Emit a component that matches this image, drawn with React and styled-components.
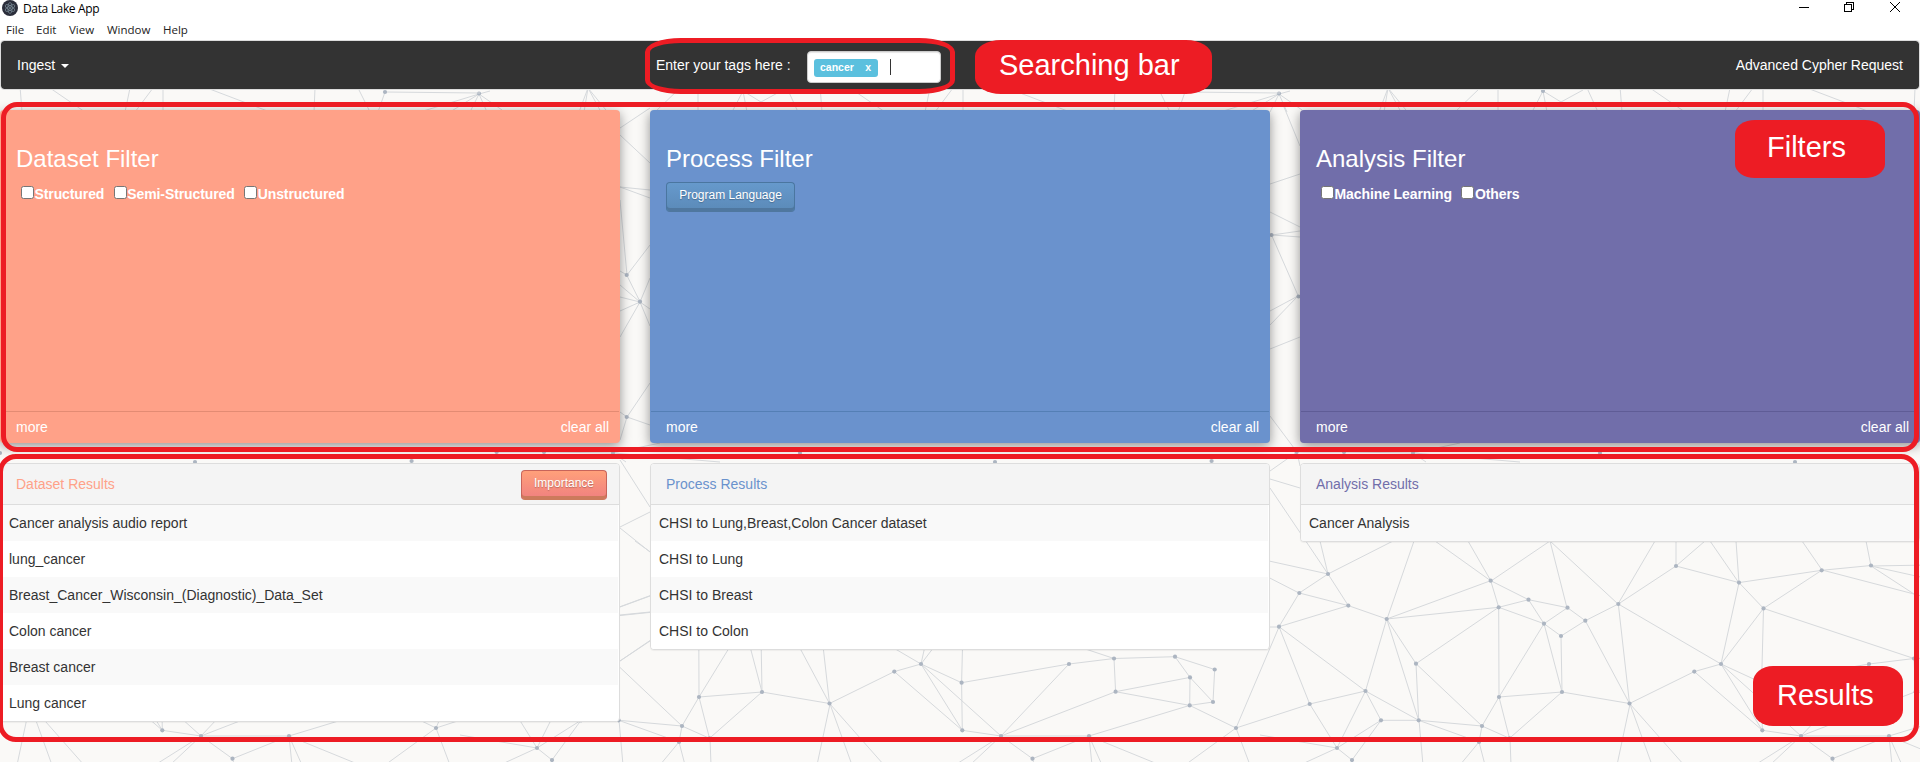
import React from 'react';
import styled, { createGlobalStyle } from 'styled-components';

const Global = createGlobalStyle`
  * { box-sizing: border-box; }
  html, body { margin: 0; padding: 0; }
  body { background: #faf9f7; font: 14px/20px "Liberation Sans", Arial, sans-serif; color: #333; overflow: hidden; }
`;

const Page = styled.div`
  position: relative;
  width: 1920px;
  height: 762px;
  overflow: hidden;
  background: #faf9f7;
`;
const Network = styled.svg`
  position: absolute;
  left: 0;
  top: 0;
`;
const Content = styled.div`
  position: relative;
`;
const Chrome = styled.div`
  height: 40px;
  background: #fff;
  color: #000;
  font: 12px/16px "Open Sans", "Noto Sans", sans-serif;
`;
const TitleBar = styled.div`
  height: 19px;
  display: flex;
  align-items: flex-start;
  padding-left: 2px;
`;
const AppName = styled.span`
  flex: 1;
  padding: 1px 0 0 5px;
  letter-spacing: -0.35px;
`;
const WindowButtons = styled.svg`
  flex: none;
  margin-right: 19px;
`;
const MenuBar = styled.div`
  display: flex;
  gap: 12px;
  padding: 3px 0 0 6px;
  font-size: 11.5px;
  color: #222;
`;
const MenuItem = styled.span`
  width: ${(p) => p.$w}px;
  white-space: nowrap;
`;

const Navbar = styled.nav`
  height: 50px;
  border: 1px solid #ddd;
  border-radius: 4px;
  background: #333;
  background-clip: padding-box;
  color: #fff;
  display: flex;
  align-items: center;
  padding: 0 16px;
`;
const NavSide = styled.div`
  flex: 1;
  display: flex;
  align-items: center;
  justify-content: ${(p) => (p.$end ? 'flex-end' : 'flex-start')};
`;
const Caret = styled.span`
  margin: 1px 0 0 6px;
  border: 4px solid transparent;
  border-top-color: #fff;
  border-bottom: 0;
`;
const Search = styled.div`
  display: flex;
  align-items: center;
  width: 285px;
  margin-right: 323px;
`;
const SearchLabel = styled.span`
  width: 151px;
`;
const TagInput = styled.div`
  width: 134px;
  height: 32px;
  margin-top: 3px;
  padding: 0 6px;
  border: 1px solid #ccc;
  border-radius: 4px;
  background: #fff;
  box-shadow: inset 0 1px 1px rgba(0, 0, 0, 0.1);
  display: flex;
  align-items: center;
`;
const Tag = styled.span`
  width: 64px;
  height: 18px;
  margin-top: 2px;
  padding: 0 7px 0 6px;
  border-radius: 3px;
  background: #5bc0de;
  color: #fff;
  font: bold 10.5px/17px "Liberation Sans", Arial, sans-serif;
  display: flex;
  justify-content: space-between;
`;
const TextCursor = styled.span`
  width: 1px;
  height: 16px;
  margin-left: 12px;
  background: #333;
`;

const Columns = styled.div`
  display: grid;
  grid-template-columns: 620px 620px 620px;
  column-gap: 30px;
  align-items: start;
`;
const FilterRow = styled(Columns)`
  margin-top: 20px;
`;
const ResultRow = styled(Columns)`
  margin-top: 20px;
`;
const FilterCard = styled.section`
  height: 333px;
  border-radius: 4px;
  background: ${(p) => p.$color};
  color: #fff;
  box-shadow: 0 3px 12px rgba(0, 0, 0, 0.42);
  display: flex;
  flex-direction: column;
`;
const FilterBody = styled.div`
  flex: 1;
  padding: 36px 16px 0;
`;
const FilterTitle = styled.h3`
  margin: 0;
  font-size: 24px;
  line-height: 26px;
  font-weight: 400;
`;
const CheckRow = styled.div`
  display: flex;
  gap: 9.5px;
  padding: 12px 0 0 5px;
`;
const CheckLabel = styled.label`
  display: flex;
  height: 20px;
  font-weight: 700;
  letter-spacing: -0.1px;
`;
const Box = styled.span`
  width: 13px;
  height: 13px;
  margin: 2px 0.5px 0 0;
  border: 1px solid #767676;
  border-radius: 2.5px;
  background: #fff;
`;
const FilterFooter = styled.footer`
  height: 32px;
  margin: 0 1px;
  padding: 5px 10px 0 15px;
  border-top: 1px solid ${(p) => p.$line};
  display: flex;
  justify-content: space-between;
`;
const RaisedButton = styled.button`
  width: ${(p) => p.$w}px;
  height: 30px;
  padding: 0 0 5px;
  font: 12px/18px "Liberation Sans", Arial, sans-serif;
  color: #fff;
  border: 1px solid ${(p) => p.$edge};
  border-bottom: 1px solid ${(p) => p.$base};
  border-radius: 4px;
  background: linear-gradient(${(p) => p.$from}, ${(p) => p.$to});
  box-shadow: inset 0 -3px 0 ${(p) => p.$base};
  text-shadow: 0 1px 1px rgba(0, 0, 0, 0.25);
`;
const FilterAction = styled.div`
  padding-top: 10px;
`;

const ResultCard = styled.section`
  border: 1px solid #ddd;
  border-radius: 4px;
  background: #fff;
  box-shadow: 0 1px 1px rgba(0, 0, 0, 0.05);
  overflow: hidden;
`;
const ResultHeader = styled.header`
  height: 41px;
  padding: 2px 12px 0 15px;
  border-bottom: 1px solid #ddd;
  background: #f4f4f4;
  color: ${(p) => p.$color};
  display: flex;
  justify-content: space-between;
  align-items: center;
`;
const HeaderText = styled.span`
  margin-top: -2px;
`;
const ResultItem = styled.div`
  height: 36px;
  padding: 8px;
  margin-right: 1px;
  background: ${(p) => (p.$odd ? '#f9f9f9' : '#fff')};
`;

const Outline = styled.div`
  position: absolute;
  left: ${(p) => p.$x}px;
  top: ${(p) => p.$y}px;
  width: ${(p) => p.$w}px;
  height: ${(p) => p.$h}px;
  border: 5px solid #ed1c24;
  border-radius: ${(p) => p.$r};
`;
const Callout = styled(Outline)`
  border: 0;
  background: #ed1c24;
  color: #fff;
  font-size: 29px;
  line-height: ${(p) => p.$lh}px;
  padding-left: ${(p) => p.$pad}px;
  white-space: nowrap;
`;

const NODES = [
  [1328,574],[1299.3,593],[1348.3,605.6],[1279,626.7],[1386.7,619],[1416,663.7],[1365.5,691],[1309.7,704],[1381,720.3],[1418.7,720.3],
  [1337,748],[1352,760],[1490.7,580.7],[1498.7,607.3],[1528.5,599.7],[1544,623.7],[1567.5,607.7],[1585.3,620.7],[1561,636],[1562,692],
  [1499,697],[1482,726],[1509.5,738.3],[1479,742],[1618.3,604],[1676,566],[1739,582.6],[1821.7,570.3],[1871,565.5],[1763.5,608.4],
  [1721,664],[1694.3,671.6],[1629.5,703.5],[1762.3,730.3],[1801,736],[1889,736],[1832.5,758.7],[1914,658.5],[1869,664],[1761.6,682.7],
  [1915.6,691.7],[1975,656.7],[2014.7,669.5],[1990,677.4],[2013,702],[1989.7,705.4],[2036,728],
  [1296.6,452],[1344,452],[1413,453],[1600,453],[1795,462],[2011.6,461],[1426.7,275],[1440,301.7],[1426.7,417],[1985,92],[1543,91],[1279,93.5],
  [1271.5,235],[1298.5,296.5],
];
const EDGES = [
  [0,1],[0,2],[1,2],[1,3],[2,3],[2,4],[3,7],[3,6],[7,6],[7,10],[6,4],[4,5],[4,9],[4,12],[4,13],[6,9],[6,8],[6,10],[8,9],[8,10],[8,11],
  [5,13],[5,21],[5,9],[9,21],[9,23],[21,22],[21,20],[21,23],[20,13],[20,19],[20,15],[20,22],[22,19],[15,19],[15,18],[18,17],[18,19],
  [15,13],[15,14],[15,16],[14,16],[16,17],[14,13],[13,12],[12,14],[17,32],[17,24],[19,32],[24,25],[24,30],[24,32],[25,26],[26,27],
  [26,29],[26,30],[27,29],[27,28],[29,37],[29,30],[29,39],[30,31],[30,39],[30,33],[30,34],[31,32],[31,33],[39,38],[39,33],[38,34],
  [38,37],[37,41],[37,40],[40,43],[40,45],[40,34],[43,45],[43,44],[41,43],[41,42],[42,44],[44,45],[45,46],[45,35],[34,35],[33,34],
  [36,35],[36,34],[53,54],[10,11],[59,60],
];
const RAYS = [
  [1328,574,1393,541],[1328,574,1320,541],[1299,593,1260,573],[1328,574,1260,559],[1279,627,1236,728],[1310,704,1236,728],
  [1387,619,1414,541],[1491,581,1435,541],[1491,581,1468,541],[1491,581,1550,541],[1567,608,1550,541],[1618,604,1550,541],
  [1618,604,1655,541],[1676,566,1676,541],[1676,566,1705,541],[1739,583,1710,541],[1739,583,1736,541],[1822,570,1802,541],
  [1871,566,1866,541],[1871,566,1930,565],[1871,566,1914,594],[1871,566,1925,578],[1822,570,1914,594],[1914,594,1925,597],
  [1419,720,1423,765],[1630,704,1617,765],[1630,704,1652,765],[1630,704,1684,765],[1479,742,1460,765],[1479,742,1485,765],
  [1510,738,1511,765],[1801,736,1770,765],[1801,736,1755,765],[1832,759,1838,770],[1889,736,1892,765],[1889,736,1902,765],
  [1889,736,1960,765],[2036,728,1985,765],[2036,728,2050,765],[1279,627,1265,627],[1337,748,1260,735],
  [1337,748,1300,765],[1297,452,1344,452],[1344,452,1413,453],
  [1413,453,1520,462],[1413,453,1426,462],[1413,453,1460,443],[1279,94,1290,91],
  [1279,94,1220,112],[1279,94,1250,112],[1279,94,1270,112],[1279,94,1287,112],[1279,94,1302,110],
  [1388,88,1410,115],
  [1388,88,1401,112],[1388,88,1384,112],[1388,88,1379,112],[1455,112,1480,88],[1498,86,1498,112],[1543,91,1532,112],[1543,91,1547,112],
  [1543,91,1561,102],[1561,102,1583,90],[1587,88,1598,112],[1620,86,1622,112],[1650,88,1685,112],[1730,88,1725,112],[1753,88,1735,112],
  [1763,88,1763,112],[1807,88,1870,112],[1915,88,1914,112],[1958,88,1970,112],[1985,92,1978,112],[1985,92,2080,93],
];
const GUTTER_RAYS = [
  [620,128,650,108],[620,135,650,163],[620,187,650,190],[620,187,650,198],[620,200,627,275],[627,275,650,245],[627,275,620,271],
  [640,302,650,278],[640,302,650,309],[640,302,650,326],[640,302,620,337],[640,302,620,311],[640,302,620,297],[640,302,620,285],
  [627,417,650,383],[627,417,650,425],[627,417,620,412],[627,417,620,440],
  [620,460,650,507],[620,527,650,512],[620,528,650,552],[620,607,650,596],[620,615,650,612],[620,661,650,641],
  [1284,107,1300,146],[1270,184,1300,174],[1270,212,1300,227],[1272,235,1300,231],[1272,235,1300,237],[1298,296,1270,311],
  [1298,296,1270,325],[1270,349,1300,337],[1270,416,1297,452],[1270,471,1297,452],[1297,452,1300,466],[1270,479,1300,488],
  [1270,488,1328,574],
];

const MARKS = [
  { x: 1, y: 102, w: 1918, h: 350, r: '16px' },
  { x: -2, y: 454, w: 1921, h: 288, r: '18px' },
  { x: 645, y: 38, w: 310, h: 56, r: '36px / 14px' },
];

function NetworkBackground() {
  return (
    <Network width="1920" height="762" aria-hidden="true">
      <defs>
        <g id="mesh">
          <g stroke="#d6d9dc" strokeWidth="1" fill="none">
            {EDGES.map(([a, b], i) => (
              <line key={i} x1={NODES[a][0]} y1={NODES[a][1]} x2={NODES[b][0]} y2={NODES[b][1]} />
            ))}
            {RAYS.map(([x1, y1, x2, y2], i) => (
              <line key={i} x1={x1} y1={y1} x2={x2} y2={y2} />
            ))}
          </g>
          <g fill="#acb5c1">
            {NODES.map(([x, y], i) => (
              <circle key={i} cx={x} cy={y} r="2.1" />
            ))}
          </g>
        </g>
      </defs>
      <g stroke="#d6d9dc" strokeWidth="1">
        {GUTTER_RAYS.map(([x1, y1, x2, y2], i) => (
          <line key={i} x1={x1} y1={y1} x2={x2} y2={y2} />
        ))}
      </g>
      <use href="#mesh" />
      <use href="#mesh" x="-800" />
      <use href="#mesh" x="-1600" />
    </Network>
  );
}

function AppLogo() {
  return (
    <svg width="16" height="16" viewBox="0 0 16 16">
      <circle cx="8" cy="8" r="8" fill="#2b2e3b" />
      <g fill="none" stroke="#a9c4cf" strokeWidth=".6" opacity=".75">
        <ellipse cx="8" cy="8" rx="5.4" ry="2.1" transform="rotate(30 8 8)" />
        <ellipse cx="8" cy="8" rx="5.4" ry="2.1" transform="rotate(90 8 8)" />
        <ellipse cx="8" cy="8" rx="5.4" ry="2.1" transform="rotate(150 8 8)" />
      </g>
      <circle cx="8" cy="8" r=".8" fill="#a9c4cf" />
    </svg>
  );
}

function Filter({ color, line, title, options, children }) {
  return (
    <FilterCard $color={color}>
      <FilterBody>
        <FilterTitle>{title}</FilterTitle>
        {options && (
          <CheckRow>
            {options.map((o) => (
              <CheckLabel key={o}><Box />{o}</CheckLabel>
            ))}
          </CheckRow>
        )}
        {children}
      </FilterBody>
      <FilterFooter $line={line}><span>more</span><span>clear all</span></FilterFooter>
    </FilterCard>
  );
}

function Results({ color, title, items, action }) {
  return (
    <ResultCard>
      <ResultHeader $color={color}><HeaderText>{title}</HeaderText>{action}</ResultHeader>
      {items.map((t, i) => (
        <ResultItem key={t} $odd={i % 2 === 0}>{t}</ResultItem>
      ))}
    </ResultCard>
  );
}

export default function App() {
  return (
    <Page>
      <Global />
      <NetworkBackground />
      <Content>
        <Chrome>
          <TitleBar>
            <AppLogo />
            <AppName>Data Lake App</AppName>
            <WindowButtons width="102" height="16" fill="none" stroke="#000" shapeRendering="crispEdges">
              <path d="M0 7.5h10M45.500 4.500h7v7h-7zM47.500 4.500v-2h7v7h-2" />
              <path d="M91 2l10 10M101 2l-10 10" shapeRendering="auto" />
            </WindowButtons>
          </TitleBar>
          <MenuBar>
            <MenuItem $w={18}>File</MenuItem>
            <MenuItem $w={21}>Edit</MenuItem>
            <MenuItem $w={26}>View</MenuItem>
            <MenuItem $w={44}>Window</MenuItem>
            <MenuItem $w={26}>Help</MenuItem>
          </MenuBar>
        </Chrome>
        <Navbar>
          <NavSide>Ingest<Caret /></NavSide>
          <Search>
            <SearchLabel>Enter your tags here :</SearchLabel>
            <TagInput>
              <Tag><span>cancer</span><span>x</span></Tag>
              <TextCursor />
            </TagInput>
          </Search>
          <NavSide $end>Advanced Cypher Request</NavSide>
        </Navbar>
        <FilterRow>
          <Filter color="#ffa188" line="#e38b73" title="Dataset Filter" options={['Structured', 'Semi-Structured', 'Unstructured']} />
          <Filter color="#6a92cd" line="#547fb5" title="Process Filter">
            <FilterAction>
              <RaisedButton $w={129} $from="#6699cc" $to="#5b8ab8" $edge="#4a76a0" $base="#4f779f">Program Language</RaisedButton>
            </FilterAction>
          </Filter>
          <Filter color="#716eaa" line="#5f5c96" title="Analysis Filter" options={['Machine Learning', 'Others']} />
        </FilterRow>
        <ResultRow>
          <Results
            color="#ffa188"
            title="Dataset Results"
            action={<RaisedButton $w={86} $from="#ffa07a" $to="#f08080" $edge="#c8645a" $base="#cc7a5c">Importance</RaisedButton>}
            items={['Cancer analysis audio report', 'lung_cancer', 'Breast_Cancer_Wisconsin_(Diagnostic)_Data_Set', 'Colon cancer', 'Breast cancer', 'Lung cancer']}
          />
          <Results
            color="#6a92cd"
            title="Process Results"
            items={['CHSI to Lung,Breast,Colon Cancer dataset', 'CHSI to Lung', 'CHSI to Breast', 'CHSI to Colon']}
          />
          <Results color="#716eaa" title="Analysis Results" items={['Cancer Analysis']} />
        </ResultRow>
      </Content>
      {MARKS.map((m) => (
        <Outline key={m.y} $x={m.x} $y={m.y} $w={m.w} $h={m.h} $r={m.r} />
      ))}
      <Callout $x={975} $y={40} $w={237} $h={54} $r="26px / 16px" $lh={50} $pad={24}>Searching bar</Callout>
      <Callout $x={1735} $y={120} $w={150} $h={58} $r="20px / 14px" $lh={54} $pad={32}>Filters</Callout>
      <Callout $x={1753} $y={666} $w={150} $h={60} $r="20px / 16px" $lh={58} $pad={24}>Results</Callout>
    </Page>
  );
}
